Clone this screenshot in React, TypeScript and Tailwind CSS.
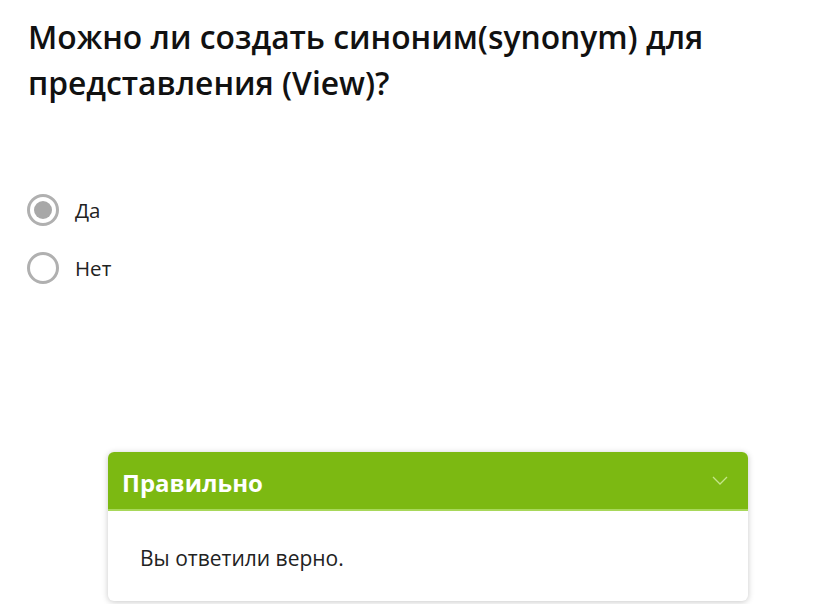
import React from 'react';

const RadioOption: React.FC<{ label: string; checked?: boolean }> = ({ label, checked }) => (
  <label className="flex items-center h-[30px]">
    <span className="w-[32px] h-[32px] rounded-full border-[3px] border-[#b0b0b0] flex items-center justify-center">
      {checked && <span className="w-[18px] h-[18px] rounded-full bg-[#a8a8a8]" />}
    </span>
    <span className="ml-[16px] text-[20.5px] text-[#222]">{label}</span>
  </label>
);

export default function App() {
  return (
    <div className="w-[821px] h-[604px] bg-white overflow-hidden" style={{ fontFamily: '"Open Sans", sans-serif' }}>
      <h1 className="pl-[28px] pt-[14px] pr-[60px] text-[31.8px] leading-[46px] font-semibold text-[#111]">
        Можно ли создать синоним(synonym) для представления (View)?
      </h1>
      <div className="mt-[89px] pl-[27px] flex flex-col gap-[28px]">
        <RadioOption label="Да" checked />
        <RadioOption label="Нет" />
      </div>
      <div className="mt-[169px] ml-[108px] w-[640px] rounded-[6px] shadow-[0_1px_6px_rgba(0,0,0,0.22)] overflow-hidden">
        <div className="h-[59px] bg-[#7cb912] flex items-center justify-between pt-[5px] pl-[14px] pr-[20px] border-b-2 border-[#a8d85a]">
          <span className="text-white font-bold text-[24px]">Правильно</span>
          <svg width="16" height="10" viewBox="0 0 16 10" fill="none" className="-mt-[4px]">
            <path d="M1 1l7 7 7-7" stroke="#c5e58a" strokeWidth="1.3" />
          </svg>
        </div>
        <div className="h-[90px] pl-[32px] pt-[5px] flex items-center text-[21px] text-[#222]">
          Вы ответили верно.
        </div>
      </div>
    </div>
  );
}
